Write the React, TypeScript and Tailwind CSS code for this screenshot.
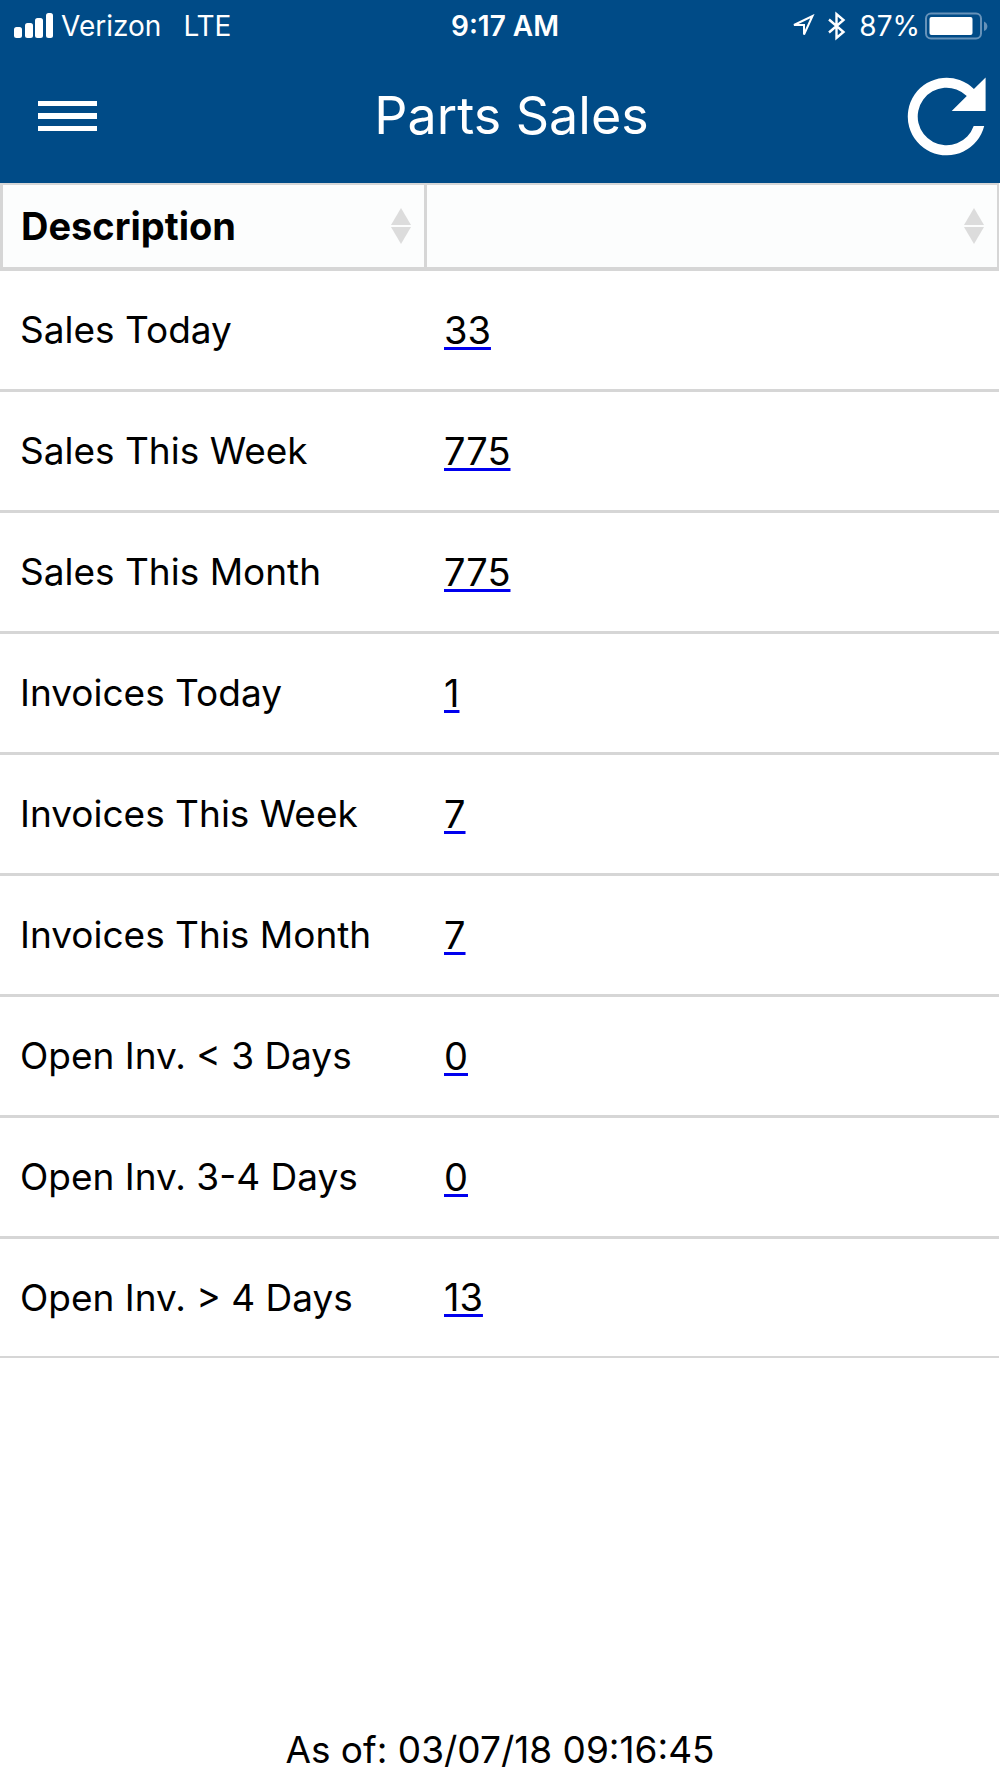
import { useState } from 'react';

interface Metric {
  label: string;
  value: number;
}

const metrics: Metric[] = [
  { label: 'Sales Today', value: 33 },
  { label: 'Sales This Week', value: 775 },
  { label: 'Sales This Month', value: 775 },
  { label: 'Invoices Today', value: 1 },
  { label: 'Invoices This Week', value: 7 },
  { label: 'Invoices This Month', value: 7 },
  { label: 'Open Inv. < 3 Days', value: 0 },
  { label: 'Open Inv. 3-4 Days', value: 0 },
  { label: 'Open Inv. > 4 Days', value: 13 },
];

function SortIcon() {
  return (
    <svg width="20" height="36" viewBox="0 0 20 36" fill="#dcdcdc" aria-hidden="true">
      <path d="M10 0L20 17H0z" />
      <path d="M0 19H20L10 36z" />
    </svg>
  );
}

function StatusBar() {
  return (
    <div className="grid grid-cols-[1fr_auto_1fr] items-center h-[51px] pl-[14px] pr-1 text-[28px] leading-8">
      <div className="flex items-center">
        <svg width="40" height="26" viewBox="0 0 40 26" fill="currentColor" aria-hidden="true">
          <rect x="0" y="14" width="8" height="11" rx="2.5" />
          <rect x="11" y="10" width="8" height="15" rx="2.5" />
          <rect x="21" y="5" width="8" height="20" rx="2.5" />
          <rect x="32" y="0" width="7" height="25" rx="2.5" />
        </svg>
        <span className="ml-[7px]">Verizon</span>
        <span className="ml-[22px]">LTE</span>
      </div>
      <div className="font-semibold">9:17 AM</div>
      <div className="flex items-center justify-end">
        {/* Location */}
        <svg width="24" height="24" viewBox="0 0 24 24" fill="none" stroke="currentColor" strokeWidth="2" aria-hidden="true">
          <path d="M3 11L21.500 2L13 20.500V11z" />
        </svg>
        {/* Bluetooth */}
        <svg className="ml-3" width="20" height="30" viewBox="0 0 20 30" fill="none" stroke="currentColor" strokeWidth="2.4" aria-hidden="true">
          <path d="M2 8.500L16.500 21L9.500 27V3L16.500 9L2 21.500" />
        </svg>
        <span className="ml-3">87%</span>
        {/* Battery */}
        <svg className="ml-1" width="72" height="28" viewBox="0 0 72 28" aria-hidden="true">
          <rect x="2" y="1.500" width="55" height="25" rx="5" fill="none" stroke="#6692b9" strokeWidth="2" />
          <rect x="5.500" y="5" width="43" height="18" rx="2" fill="#fff" />
          <path d="M60 9.500C64.500 11.500 64.500 17.500 60 19z" fill="#6692b9" />
        </svg>
      </div>
    </div>
  );
}

export default function App() {
  const [ascending, setAscending] = useState(true);
  const rows = ascending ? metrics : [...metrics].reverse();

  return (
    <div className="min-h-screen flex flex-col bg-white text-black font-['Inter','Liberation_Sans',sans-serif] text-[37px] leading-[46px]">
      <header className="bg-[#004b87] text-white">
        <StatusBar />
        <div className="flex items-center h-[132px] pb-[2px] pl-[10px] pr-[5px]">
          <button type="button" aria-label="Menu" className="flex items-center justify-center w-[115px] h-[115px]">
            <svg width="59" height="30" viewBox="0 0 59 30" fill="currentColor" aria-hidden="true">
              <rect width="59" height="5" />
              <rect y="12" width="59" height="6" />
              <rect y="25" width="59" height="5" />
            </svg>
          </button>
          <h1 className="flex-1 text-center text-[52px] leading-[64px] font-normal">Parts Sales</h1>
          <button type="button" aria-label="Refresh" className="flex items-center justify-center w-[97px] h-[97px]">
            <svg width="97" height="97" viewBox="0 0 97 97" fill="currentColor" aria-hidden="true">
              <path d="M86.200 58A38.800 38.800 0 1 1 75.900 21L87.600 9.500V43H53.700L68.800 28A28.800 28.800 0 1 0 75.700 58z" />
            </svg>
          </button>
        </div>
      </header>

      <main className="flex-1 pr-px">
        <table className="w-full table-fixed border-separate border-spacing-0">
          <colgroup>
            <col className="w-[427px]" />
            <col />
          </colgroup>
          <thead>
            <tr className="bg-[#fcfdfd]">
              <th scope="col" className="h-[88px] p-0 border-x-3 border-t-2 border-b-4 border-[#d6d6d6] text-left font-bold">
                <button
                  type="button"
                  className="flex items-center justify-between w-full pl-[18px] pr-[13px] text-[38px]"
                  onClick={() => setAscending(!ascending)}
                >
                  Description
                  <SortIcon />
                </button>
              </th>
              <th scope="col" className="p-0 border-r-2 border-t-2 border-b-4 border-[#d6d6d6]">
                <button type="button" aria-label="Sort by value" className="flex items-center justify-end w-full pr-[13px]">
                  <SortIcon />
                </button>
              </th>
            </tr>
          </thead>
          <tbody>
            {rows.map((row) => (
              <tr key={row.label} className="group h-[121px] last:h-[119px]">
                <td className="p-0 pl-5 border-b-3 border-[#d6d6d6] group-last:border-b-2">{row.label}</td>
                <td className="p-0 pl-[17px] border-b-3 border-[#d6d6d6] group-last:border-b-2">
                  <a href="#" className="text-[38px] underline decoration-[#0000ee] decoration-3 underline-offset-3">
                    {row.value}
                  </a>
                </td>
              </tr>
            ))}
          </tbody>
        </table>
      </main>

      <footer className="pb-[5px] text-center">As of: 03/07/18 09:16:45</footer>
    </div>
  );
}
